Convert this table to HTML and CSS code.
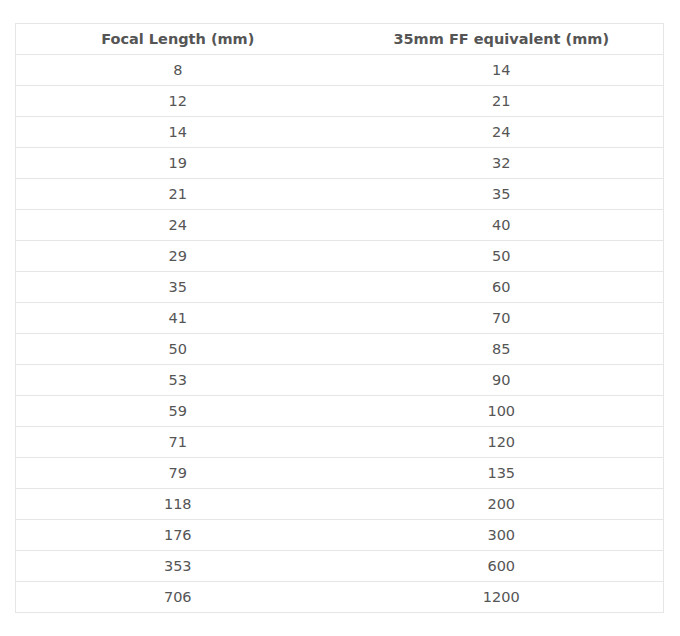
FILE: index.html
```html
<!DOCTYPE html>
<html>
<head>
<meta charset="utf-8">
<link rel="stylesheet" href="styles.css">
</head>
<body>
<table class="focal">
  <thead>
    <tr><th>Focal Length (mm)</th><th>35mm FF equivalent (mm)</th></tr>
  </thead>
  <tbody>
    <tr><td>8</td><td>14</td></tr>
    <tr><td>12</td><td>21</td></tr>
    <tr><td>14</td><td>24</td></tr>
    <tr><td>19</td><td>32</td></tr>
    <tr><td>21</td><td>35</td></tr>
    <tr><td>24</td><td>40</td></tr>
    <tr><td>29</td><td>50</td></tr>
    <tr><td>35</td><td>60</td></tr>
    <tr><td>41</td><td>70</td></tr>
    <tr><td>50</td><td>85</td></tr>
    <tr><td>53</td><td>90</td></tr>
    <tr><td>59</td><td>100</td></tr>
    <tr><td>71</td><td>120</td></tr>
    <tr><td>79</td><td>135</td></tr>
    <tr><td>118</td><td>200</td></tr>
    <tr><td>176</td><td>300</td></tr>
    <tr><td>353</td><td>600</td></tr>
    <tr><td>706</td><td>1200</td></tr>
  </tbody>
</table>
</body>
</html>
```
FILE: styles.css
```css
html, body {
  margin: 0;
  background: #fff;
}
body {
  padding: 23px 16px 0 15px;
  font-family: "DejaVu Sans", Verdana, sans-serif;
  font-size: 14.5px;
  color: #555;
}
.focal {
  width: 649px;
  border-collapse: collapse;
  border: 1px solid #e6e6e6;
  table-layout: fixed;
}
.focal th, .focal td {
  height: 30px;
  padding: 0;
  text-align: center;
  vertical-align: middle;
  border-bottom: 1px solid #e6e6e6;
  line-height: 16px;
}
.focal th {
  font-weight: bold;
  color: #555;
}
```
